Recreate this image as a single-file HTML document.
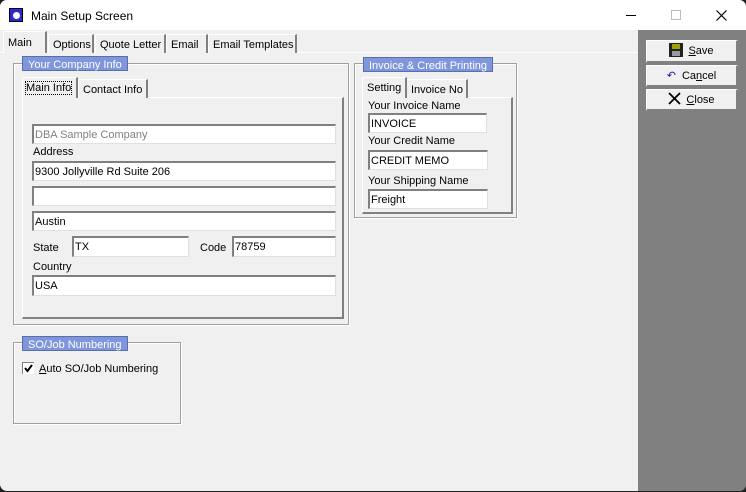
<!DOCTYPE html><html><head><style>
*{margin:0;padding:0;box-sizing:border-box}
body{width:746px;height:492px;overflow:hidden;background:#202020;font-family:"Liberation Sans",Arial,sans-serif;font-size:11px;color:#000;position:relative}
.win{position:absolute;left:0;top:0;width:746px;height:491px;background:#f0f0f0;border-radius:7px;overflow:hidden}
.a{position:absolute}
.title{left:0;top:0;width:746px;height:30px;background:#fff}
.inp{position:absolute;background:#fff;border-top:2px solid #808080;border-left:2px solid #808080;border-right:1px solid #e0e0e0;border-bottom:1px solid #e0e0e0;padding:2px 0 0 1px;font-size:11px;line-height:14px;white-space:nowrap}
.grp{position:absolute;border:1px solid #a0a0a0;box-shadow:inset 1px 1px 0 #fff,1px 1px 0 #fff}
.leg{position:absolute;background:#7f96dc;color:#fff;font-size:11px;padding:2px 5px 0;height:15px;line-height:13px;border:1px solid #5a6ea8;white-space:nowrap}
.tab{position:absolute;border-right:2px solid #808080;border-left:1px solid #fff;border-top:1px solid #fff;background:#f0f0f0;padding:4px 4px 2px;white-space:nowrap;font-size:11px;line-height:13px}
.page{position:absolute;border-left:1px solid #fff;border-top:1px solid #fff;border-right:2px solid #808080;border-bottom:2px solid #808080}
.lbl{position:absolute;white-space:nowrap;font-size:11px;margin-top:1px}
.btn{position:absolute;left:646px;width:92px;background:#f0f0f0;border-top:1px solid #fff;border-left:1px solid #fff;border-right:2px solid #808080;border-bottom:2px solid #808080;font-size:11px;line-height:21px;text-align:center}
</style></head><body><div class="win">
<div class="a title"></div>
<div class="a" style="left:9px;top:8px;width:14px;height:14px;background:#2a2ad0;border:1px solid #000"><div style="position:absolute;left:3px;top:3px;width:7px;height:7px;border-radius:50%;background:#fff"></div></div>
<div class="lbl" style="left:31px;top:8px;font-size:12px">Main Setup Screen</div>
<div class="a" style="left:626px;top:15px;width:10px;height:1px;background:#000"></div>
<div class="a" style="left:671px;top:10px;width:10px;height:10px;border:1px solid #bbb"></div>
<svg class="a" style="left:716px;top:10px" width="11" height="11"><path d="M0.5 0.5L10.5 10.5M10.5 0.5L0.5 10.5" stroke="#000" stroke-width="1.2"/></svg>
<div class="a" style="left:638px;top:30px;width:108px;height:462px;background:#808080"></div>
<div class="a" style="left:0;top:52px;width:638px;height:1px;background:#fff"></div>
<div class="tab" style="left:48px;top:34px;height:19px;width:46px">Options</div>
<div class="tab" style="left:95px;top:34px;height:19px;width:71px">Quote Letter</div>
<div class="tab" style="left:166px;top:34px;height:19px;width:42px">Email</div>
<div class="tab" style="left:208px;top:34px;height:19px;width:89px">Email Templates</div>
<div class="tab" style="left:3px;top:31px;height:22px;width:44px;padding-top:5px">Main</div>

<div class="grp" style="left:13px;top:63px;width:336px;height:262px"></div>
<div class="leg" style="left:22px;top:56px">Your Company Info</div>
<div class="page" style="left:22px;top:97px;width:322px;height:222px"></div>
<div class="tab" style="left:78px;top:79px;height:19px;width:70px">Contact Info</div>
<div class="tab" style="left:22px;top:77px;height:21px;width:56px;padding-left:3px"><span style="outline:1px dotted #000">Main Info</span></div>
<div class="inp" style="left:32px;top:124px;width:304px;height:20px;color:#808080">DBA Sample Company</div>
<div class="lbl" style="left:33px;top:145px">Address</div>
<div class="inp" style="left:32px;top:161px;width:304px;height:20px">9300 Jollyville Rd Suite 206</div>
<div class="inp" style="left:32px;top:186px;width:304px;height:20px"></div>
<div class="inp" style="left:32px;top:211px;width:304px;height:20px">Austin</div>
<div class="lbl" style="left:33px;top:241px">State</div>
<div class="inp" style="left:72px;top:236px;width:117px;height:21px">TX</div>
<div class="lbl" style="left:200px;top:241px">Code</div>
<div class="inp" style="left:232px;top:236px;width:104px;height:21px">78759</div>
<div class="lbl" style="left:33px;top:260px">Country</div>
<div class="inp" style="left:32px;top:275px;width:304px;height:21px">USA</div>

<div class="grp" style="left:13px;top:342px;width:168px;height:82px"></div>
<div class="leg" style="left:22px;top:336px">SO/Job Numbering</div>
<div class="a" style="left:22px;top:362px;width:12px;height:12px;background:#fff;border-top:1px solid #808080;border-left:1px solid #808080"><svg width="11" height="11" style="position:absolute;left:0;top:0"><path d="M2 5L4.5 8L9 2" stroke="#000" stroke-width="2" fill="none"/></svg></div>
<div class="lbl" style="left:39px;top:362px"><u>A</u>uto SO/Job Numbering</div>

<div class="grp" style="left:354px;top:63px;width:163px;height:155px"></div>
<div class="leg" style="left:363px;top:57px">Invoice &amp; Credit Printing</div>
<div class="page" style="left:362px;top:97px;width:151px;height:117px"></div>
<div class="tab" style="left:406px;top:79px;height:19px;width:62px">Invoice No</div>
<div class="tab" style="left:362px;top:77px;height:21px;width:45px">Setting</div>
<div class="lbl" style="left:368px;top:99px">Your Invoice Name</div>
<div class="inp" style="left:368px;top:113px;width:119px;height:20px">INVOICE</div>
<div class="lbl" style="left:368px;top:134px">Your Credit Name</div>
<div class="inp" style="left:368px;top:150px;width:120px;height:20px">CREDIT MEMO</div>
<div class="lbl" style="left:368px;top:174px">Your Shipping Name</div>
<div class="inp" style="left:368px;top:189px;width:120px;height:20px">Freight</div>

<div class="btn" style="top:40px;height:23px"><span style="display:inline-block;width:14px;height:14px;background:#222;vertical-align:-3px;margin-right:5px;position:relative"><span style="position:absolute;left:3px;top:1px;width:8px;height:5px;background:#a0a000"></span><span style="position:absolute;left:3px;top:8px;width:8px;height:5px;background:#999"></span></span><u>S</u>ave</div>
<div class="btn" style="top:65px;height:22px"><span style="color:#1a1a8a;margin-right:6px">↶</span>Ca<u>n</u>cel</div>
<div class="btn" style="top:89px;height:22px"><svg width="13" height="13" style="vertical-align:-2px;margin-right:5px"><path d="M1 1L12 12M12 1L1 12" stroke="#000" stroke-width="1.8"/></svg><u>C</u>lose</div>
</div></body></html>
